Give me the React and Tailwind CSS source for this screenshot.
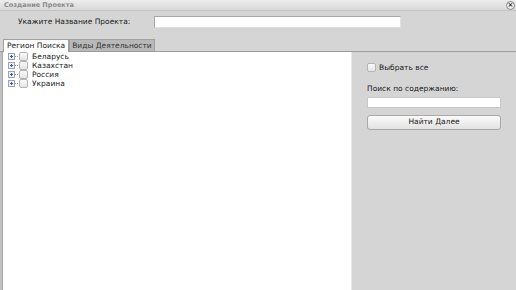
import React from "react";

const font = { fontFamily: '"DejaVu Sans", Verdana, sans-serif' };

function Expander() {
  return (
    <span className="flex items-center">
      <span className="w-[7px] h-[7px] border border-[#9aa4b4] bg-[#eef2f8] flex items-center justify-center relative">
        <span className="absolute w-[3px] h-px bg-[#3b5b9a]" />
        <span className="absolute w-px h-[3px] bg-[#3b5b9a]" />
      </span>
      <span className="w-[3px] border-t border-dotted border-[#999]" />
    </span>
  );
}

function Box() {
  return <span className="w-[9px] h-[9px] rounded-[2px] border border-[#b5b5b5] bg-gradient-to-b from-[#fafafa] to-[#e4e4e4]" />;
}

export default function App() {
  const items = ["Беларусь", "Казахстан", "Россия", "Украина"];
  return (
    <div className="w-[516px] h-[290px] bg-[#d5d5d5] flex flex-col overflow-hidden text-[#1a1a1a]" style={font}>
      <div className="h-[11px] bg-gradient-to-b from-[#ececec] to-[#d9d9d9] border-b border-[#c4c4c4] flex items-center justify-between pl-[4px] pr-[1px]">
        <span className="text-[6.5px] font-bold text-[#8c8c8c] leading-none">Создание Проекта</span>
        <span className="w-[9px] h-[9px] rounded-full border border-[#888] bg-[#eee] flex items-center justify-center text-[7px] leading-none text-[#333] font-bold">×</span>
      </div>
      <div className="flex items-center h-[18px] mt-[2px]">
        <span className="ml-[18px] w-[136px] text-[7.5px] leading-none">Укажите Название Проекта:</span>
        <span className="w-[247px] h-[12px] bg-white border border-[#a8a8a8] border-r-[#e0e0e0] border-b-[#e0e0e0]" />
      </div>
      <div className="flex items-end h-[21px] pl-[3px] border-b border-[#9c9c9c]">
        <span className="h-[13px] px-[3px] bg-white border border-[#a0a0a0] border-b-0 text-[7.5px] leading-[12px] relative top-px">Регион Поиска</span>
        <span className="h-[12px] px-[2px] bg-[#b8b8b8] border border-[#a0a0a0] border-b-0 text-[7.5px] leading-[11px] text-[#333]">Виды Деятельности</span>
      </div>
      <div className="flex flex-1">
        <div className="w-[3px] bg-[#c0c0c0] border-r border-[#a8a8a8]" />
        <div className="w-[349px] bg-white pl-[5px] border-r border-[#e8e8e8]">
          {items.map((t) => (
            <div key={t} className="flex items-center h-[9px] gap-[1px]">
              <Expander />
              <Box />
              <span className="ml-[3px] text-[7.5px] leading-none">{t}</span>
            </div>
          ))}
        </div>
        <div className="flex-1 pl-[15px] pr-[15px] pt-[11px] flex flex-col">
          <div className="flex items-center gap-[3px] h-[9px]">
            <Box />
            <span className="text-[7.5px] leading-none">Выбрать все</span>
          </div>
          <span className="text-[7.5px] leading-none mt-[13px]">Поиск по содержанию:</span>
          <span className="mt-[4px] h-[11px] bg-white border border-[#c8c8c8]" />
          <button className="mt-[7px] h-[15px] rounded-[3px] border border-[#a8a8a8] bg-gradient-to-b from-[#fbfbfb] to-[#e2e2e2] text-[7.5px] leading-none text-[#1a1a1a]" style={font}>Найти Далее</button>
        </div>
      </div>
    </div>
  );
}
